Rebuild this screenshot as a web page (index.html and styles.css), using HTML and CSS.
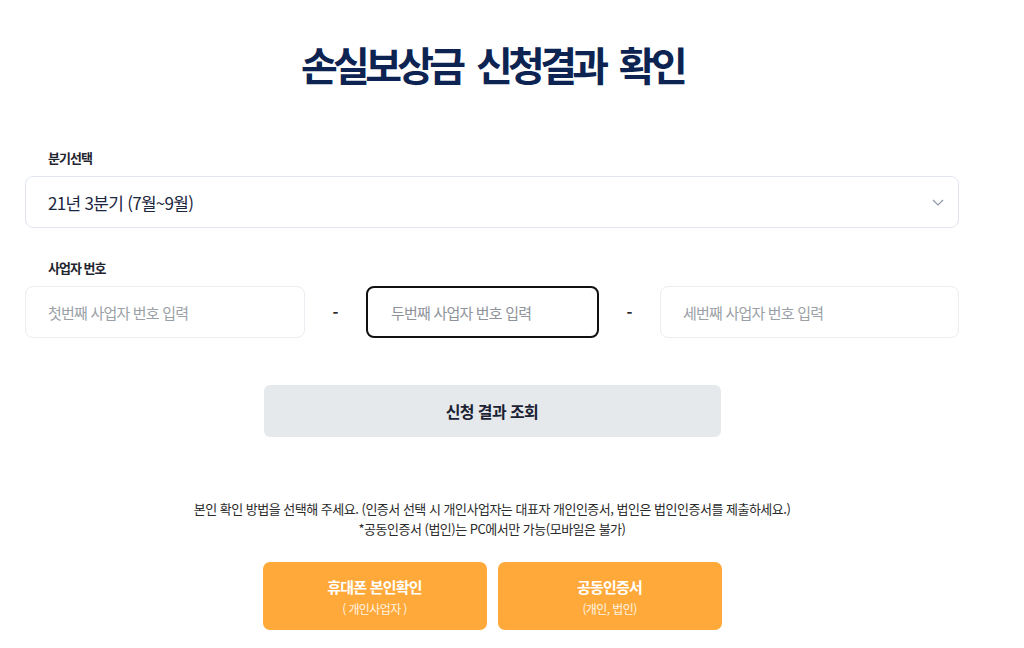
FILE: index.html
```html
<!DOCTYPE html>
<html lang="ko">
<head>
<meta charset="utf-8">
<title>손실보상금 신청결과 확인</title>
<link rel="stylesheet" href="styles.css">
</head>
<body>
<main class="page">
  <h1 class="title">손실보상금 신청결과 확인</h1>

  <div class="field-label">분기선택</div>
  <div class="select">
    <span class="select-value">21년 3분기 (7월~9월)</span>
    <svg class="chevron" width="12" height="7" viewBox="0 0 12 7"><path d="M1 1 L6 6 L11 1" fill="none" stroke="#8c95a6" stroke-width="1.1"/></svg>
  </div>

  <div class="field-label label-biz">사업자 번호</div>
  <div class="biz-row">
    <div class="input">첫번째 사업자 번호 입력</div>
    <div class="dash">-</div>
    <div class="input input-focus">두번째 사업자 번호 입력</div>
    <div class="dash">-</div>
    <div class="input">세번째 사업자 번호 입력</div>
  </div>

  <div class="submit-wrap">
    <div class="submit">신청 결과 조회</div>
  </div>

  <div class="notice">
    <p>본인 확인 방법을 선택해 주세요. (인증서 선택 시 개인사업자는 대표자 개인인증서, 법인은 법인인증서를 제출하세요.)</p>
    <p>*공동인증서 (법인)는 PC에서만 가능(모바일은 불가)</p>
  </div>

  <div class="auth-row">
    <div class="auth-btn">
      <span class="auth-title">휴대폰 본인확인</span>
      <span class="auth-sub">( 개인사업자 )</span>
    </div>
    <div class="auth-btn">
      <span class="auth-title">공동인증서</span>
      <span class="auth-sub">(개인, 법인)</span>
    </div>
  </div>
</main>
</body>
</html>
```

FILE: styles.css
```css
* { box-sizing: border-box; }
html, body { margin: 0; padding: 0; background: #fff; }
body {
  font-family: "Noto Sans CJK KR", "Noto Sans", sans-serif;
  color: #222;
}
.page {
  width: 934px;
  margin-left: 25px;
  display: flex;
  flex-direction: column;
}
.title {
  margin: 40px 0 0;
  font-size: 40px;
  line-height: 48px;
  font-weight: 700;
  letter-spacing: -4.7px;
  word-spacing: 8px;
  text-align: center;
  color: #0d2452;
}
.field-label {
  margin-top: 61px;
  padding-left: 23px;
  font-size: 13px;
  line-height: 18px;
  font-weight: 700;
  letter-spacing: -1px;
  color: #1f2530;
}
.label-biz { margin-top: 31px; }
.select {
  margin-top: 9px;
  height: 52px;
  border: 1px solid #e1e6ee;
  border-radius: 8px;
  display: flex;
  align-items: center;
  justify-content: space-between;
  padding: 0 14px 0 22px;
}
.select-value {
  font-size: 17px;
  letter-spacing: -0.7px;
  color: #1b2640;
}
.biz-row {
  margin-top: 9px;
  display: grid;
  grid-template-columns: 280px 61px 233px 61px 299px;
  height: 52px;
}
.input {
  border: 1px solid #eaedf1;
  border-radius: 8px;
  display: flex;
  align-items: center;
  padding-left: 22px;
  font-size: 15px;
  letter-spacing: -0.8px;
  color: #9b9fa6;
}
.input-focus {
  border: 2px solid #111;
  padding-left: 23px;
  color: #8f939a;
}
.dash {
  display: flex;
  align-items: center;
  justify-content: center;
  font-size: 16px;
  font-weight: 700;
  color: #2a2a2a;
}
.submit-wrap {
  margin-top: 47px;
  display: flex;
  justify-content: center;
}
.submit {
  width: 457px;
  height: 52px;
  background: #e6e9ec;
  border-radius: 6px;
  display: flex;
  align-items: center;
  justify-content: center;
  font-size: 16px;
  font-weight: 700;
  letter-spacing: -0.6px;
  color: #1b2233;
}
.notice {
  margin-top: 62px;
  text-align: center;
  font-size: 13px;
  line-height: 20px;
  letter-spacing: -0.5px;
  color: #2a2a2a;
}
.notice p { margin: 0; }
.auth-row {
  margin-top: 23px;
  display: flex;
  justify-content: center;
  gap: 11px;
}
.auth-btn {
  width: 224px;
  height: 68px;
  background: #ffa93a;
  border-radius: 7px;
  display: flex;
  flex-direction: column;
  align-items: center;
  padding-top: 14px;
  color: #fff;
}
.auth-title {
  font-size: 15px;
  line-height: 22px;
  font-weight: 700;
  letter-spacing: -0.8px;
}
.auth-sub {
  margin-top: 2px;
  font-size: 12px;
  line-height: 18px;
  letter-spacing: -0.6px;
  color: #fff3e0;
}
```
